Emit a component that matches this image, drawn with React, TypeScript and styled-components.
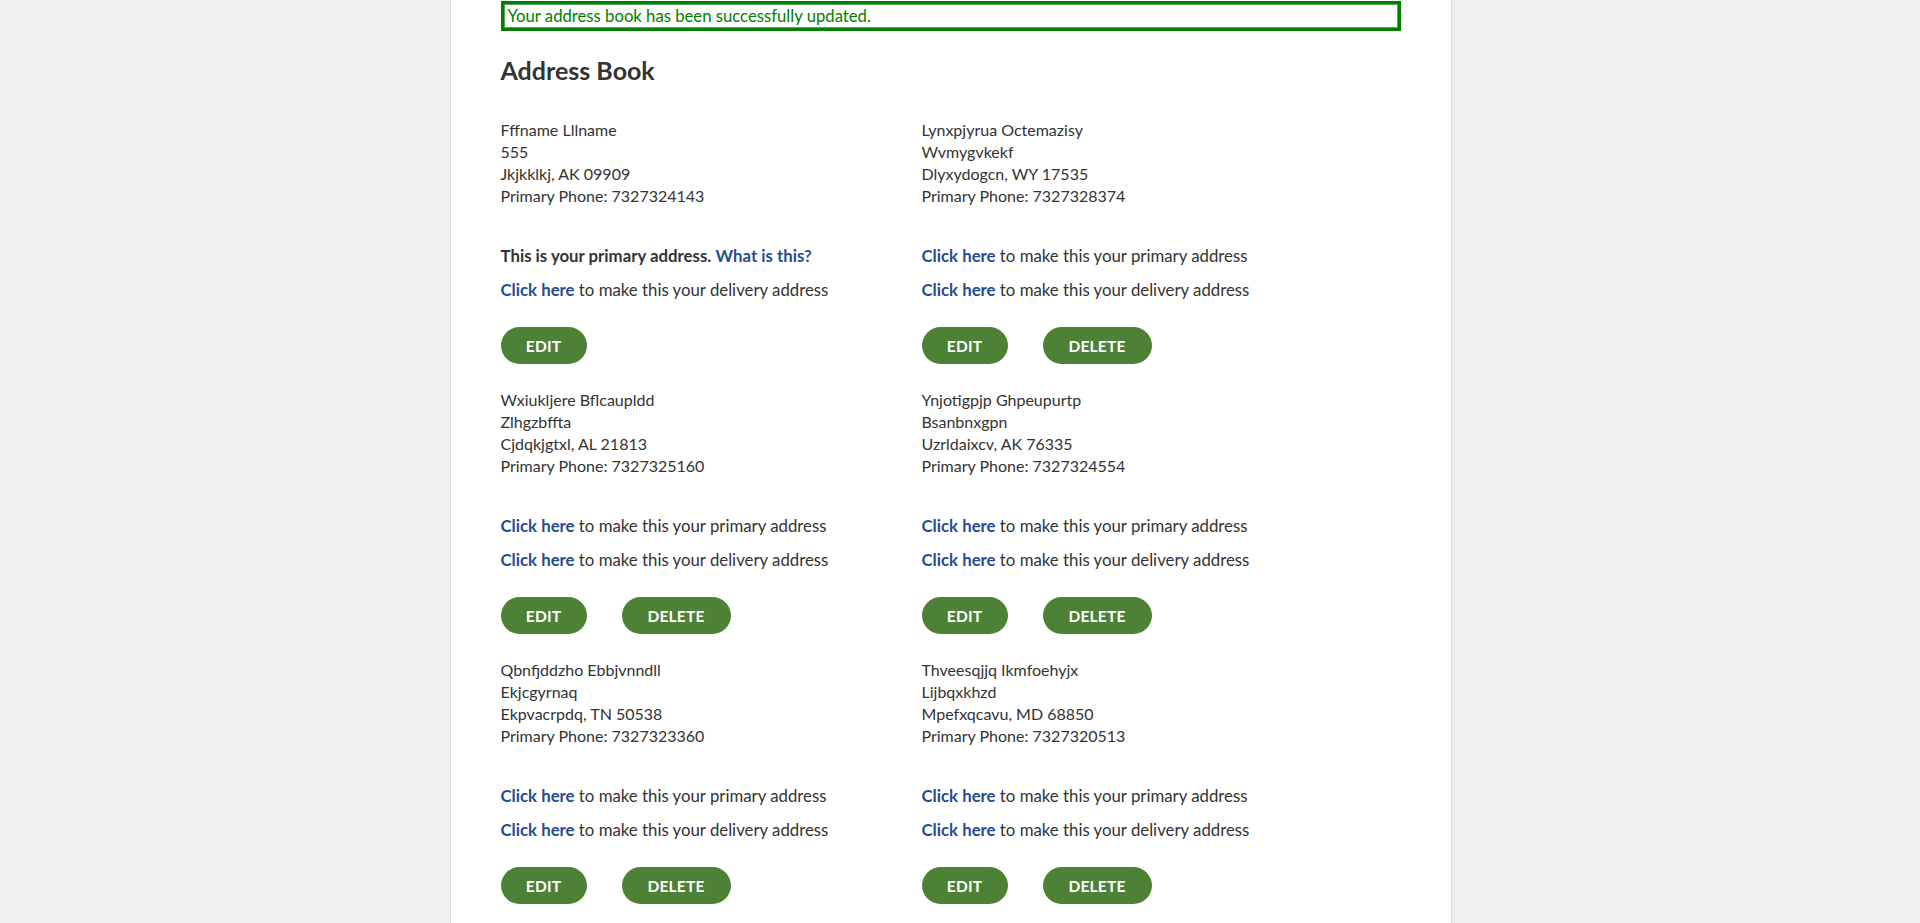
import React from "react";
import styled, { createGlobalStyle } from "styled-components";

const GlobalStyle = createGlobalStyle`
  html, body {
    margin: 0;
    padding: 0;
    height: 100%;
    overflow: hidden;
    background: #efefef;
  }
  body {
    font-family: Lato, "Liberation Sans", sans-serif;
    color: #333333;
  }
  #root { height: 100%; }
`;

const Page = styled.div`
  display: flex;
  justify-content: center;
  height: 100%;
  padding-right: 19px;
  box-sizing: border-box;
`;

const Container = styled.main`
  width: 900px;
  background: #ffffff;
  border-left: 1px solid #dddddd;
  border-right: 1px solid #dddddd;
  padding: 1px 50px 0;
  box-sizing: content-box;
`;

const SuccessBox = styled.div`
  height: 24px;
  border: 3px solid #008000;
  box-shadow: inset 0 0 0 1px #5aa35a;
  color: #008000;
  font-size: 16.7px;
  line-height: 24px;
  padding: 0 4px;
`;

const Heading = styled.h1`
  margin: 24px 0 34px;
  font-size: 25px;
  line-height: 30px;
  font-weight: 700;
  color: #333333;
`;

const Grid = styled.div`
  display: grid;
  grid-template-columns: 421px 1fr;
`;

const Card = styled.section`
  padding-bottom: 25px;
`;

const Lines = styled.div`
  font-size: 16px;
  line-height: 22px;
  margin-bottom: 38px;
`;

const Option = styled.p`
  margin: 0 0 12px;
  font-size: 16.8px;
  line-height: 22px;
`;

const Strong = styled.strong`
  font-weight: 700;
`;

const Link = styled.a`
  color: #264c8e;
  font-weight: 700;
  text-decoration: none;
  cursor: pointer;
`;

const Actions = styled.div`
  display: flex;
  gap: 35px;
  margin-top: 26px;
`;

const Button = styled.button<{ $w: number }>`
  width: ${(p) => p.$w}px;
  height: 37px;
  border: none;
  border-radius: 19px;
  background: #4d8236;
  color: #ffffff;
  font-family: Lato, "Liberation Sans", sans-serif;
  font-weight: 700;
  font-size: 15.5px;
  letter-spacing: 0.2px;
  padding: 0;
  cursor: pointer;
`;

type Addr = {
  name: string;
  street: string;
  city: string;
  phone: string;
  primary?: boolean;
};

const addresses: Addr[] = [
  { name: "Fffname Lllname", street: "555", city: "Jkjkklkj, AK 09909", phone: "7327324143", primary: true },
  { name: "Lynxpjyrua Octemazisy", street: "Wvmygvkekf", city: "Dlyxydogcn, WY 17535", phone: "7327328374" },
  { name: "Wxiukljere Bflcaupldd", street: "Zlhgzbffta", city: "Cjdqkjgtxl, AL 21813", phone: "7327325160" },
  { name: "Ynjotigpjp Ghpeupurtp", street: "Bsanbnxgpn", city: "Uzrldaixcv, AK 76335", phone: "7327324554" },
  { name: "Qbnfjddzho Ebbjvnndll", street: "Ekjcgyrnaq", city: "Ekpvacrpdq, TN 50538", phone: "7327323360" },
  { name: "Thveesqjjq Ikmfoehyjx", street: "Lijbqxkhzd", city: "Mpefxqcavu, MD 68850", phone: "7327320513" },
];

function AddressCard({ a }: { a: Addr }) {
  return (
    <Card>
      <Lines>
        <div>{a.name}</div>
        <div>{a.street}</div>
        <div>{a.city}</div>
        <div>Primary Phone: {a.phone}</div>
      </Lines>
      {a.primary ? (
        <Option>
          <Strong>This is your primary address.</Strong> <Link>What is this?</Link>
        </Option>
      ) : (
        <Option>
          <Link>Click here</Link> to make this your primary address
        </Option>
      )}
      <Option>
        <Link>Click here</Link> to make this your delivery address
      </Option>
      <Actions>
        <Button $w={86}>EDIT</Button>
        {!a.primary && <Button $w={109}>DELETE</Button>}
      </Actions>
    </Card>
  );
}

export default function App() {
  return (
    <>
      <GlobalStyle />
      <Page>
        <Container>
          <SuccessBox>Your address book has been successfully updated.</SuccessBox>
          <Heading>Address Book</Heading>
          <Grid>
            {addresses.map((a) => (
              <AddressCard key={a.name} a={a} />
            ))}
          </Grid>
        </Container>
      </Page>
    </>
  );
}
